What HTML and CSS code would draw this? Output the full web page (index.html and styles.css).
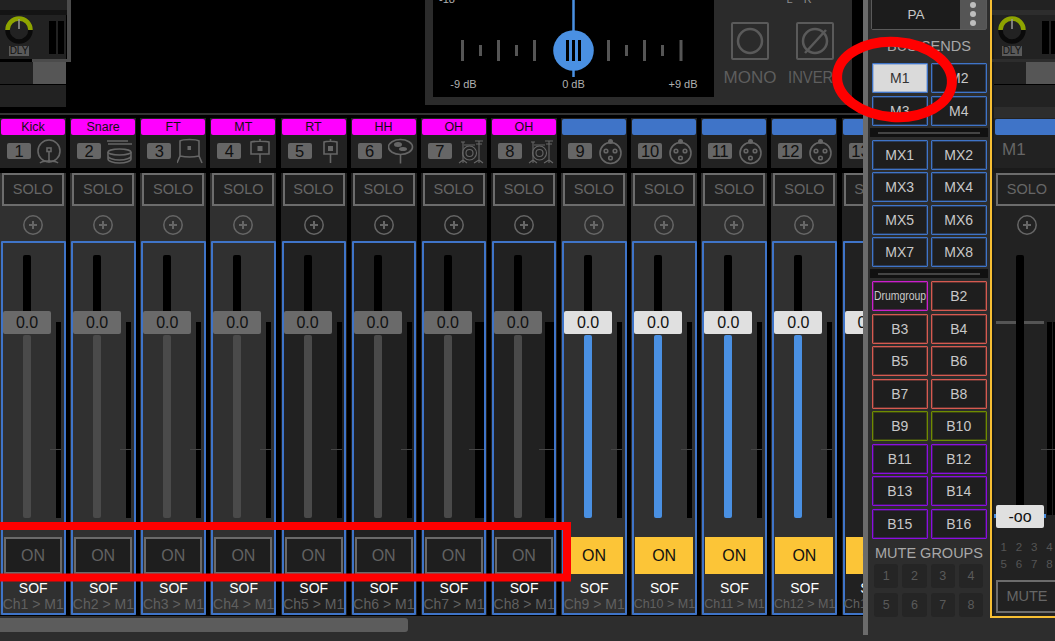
FILE: index.html
```html
<!DOCTYPE html>
<html lang="en">
<head>
<meta charset="utf-8">
<title>Mixer</title>
<link rel="stylesheet" href="styles.css">
</head>
<body>
<svg class="defs" width="0" height="0">
  <symbol id="i-kick" viewBox="0 0 26 28"><circle cx="12" cy="13" r="11"/><rect x="10" y="10" width="4" height="3.5"/><path d="M12 13.5V23M3 25c2-2 6-2 9-2s7 0 9 2"/><circle class="fill" cx="12" cy="23" r="1.6"/></symbol>
  <symbol id="i-snare" viewBox="0 0 26 28"><path d="M0 3h21M1 6h24"/><ellipse cx="12.5" cy="14" rx="11.5" ry="3"/><path d="M1 14v7c0 2 5 4 11.5 4S24 23 24 21v-7M1 18c0 2 5 4 11.5 4S24 20 24 18"/></symbol>
  <symbol id="i-floor" viewBox="0 0 26 28"><path d="M3 3c3-2 16-2 19 0v15c-5 1-14 1-19 0zM3 18l-3 7M22 18l3 7"/><rect class="fill" x="10.5" y="8" width="3.5" height="4"/></symbol>
  <symbol id="i-mid" viewBox="0 0 26 28"><path d="M4 4c3-1 15-1 18 0v12H4zM13 1v2M13 16v9"/><rect class="fill" x="10.5" y="8" width="5" height="5"/></symbol>
  <symbol id="i-rack" viewBox="0 0 26 28"><path d="M6 4c2-1 10-1 13 0v12H6zM12.5 1v2M12.5 16v9"/><rect class="fill" x="10" y="8" width="5" height="5"/></symbol>
  <symbol id="i-hh" viewBox="0 0 26 28"><ellipse cx="12.5" cy="9" rx="12" ry="7.5"/><path d="M12.5 16.500v9"/><ellipse class="fill" cx="10" cy="6.500" rx="4" ry="2.500"/><ellipse class="fill" cx="15" cy="11" rx="4" ry="2"/></symbol>
  <symbol id="i-kit" viewBox="0 0 26 28"><g class="fine"><circle cx="11.500" cy="15" r="7"/><circle cx="11.500" cy="15" r="3.500"/><path d="M6 7h11M3 4h4M5 4v21M1 25l4-3 4 3M21 3v22M16 25l5-3 4 3M17 3h8M18 6h6"/></g></symbol>
  <symbol id="i-xlr" viewBox="0 0 26 28"><circle cx="12.500" cy="15" r="10.500"/><circle class="fill" cx="12.500" cy="3.500" r="2.500"/><circle cx="8" cy="13" r="1.800"/><circle cx="17" cy="13" r="1.800"/><circle cx="12.500" cy="20" r="1.800"/></symbol>
  <symbol id="i-plus" viewBox="0 0 20 20"><circle cx="10" cy="10" r="9.200"/><path class="thick" d="M6 10h8M10 6v8"/></symbol>
</svg>
<div class="app">
  <div class="main">
    <div class="stage">
      <div class="top">
        <div class="stub">
          <div class="peek"><div class="peek-a"></div><div class="peek-b"></div></div>
          <div class="unit">
            <svg class="knob" width="28" height="28" viewBox="0 0 28 28"><path class="ring-off" d="M2.500 14a11.500 11.500 0 0 0 23 0"/><path class="ring-on" d="M2.500 14a11.500 11.500 0 0 1 23 0"/><path class="tick" d="M14 3v10"/></svg>
            <span class="dly">DLY</span>
            <div class="mini"><i></i><i></i></div>
          </div>
          <div class="corner"></div>
        </div>
        <div class="stub-low">
          <div class="bar"><div class="bar-on"></div></div>
          <div class="bar2"></div>
        </div>
        <div class="panel">
          <svg class="scale" width="281" height="97" viewBox="0 0 281 97">
            <text class="lab" x="14" y="3" text-anchor="middle">-18</text>
            <path class="ticks" d="M29.500 40v21M47.500 45v11M65.500 40v21M83.500 45v11M101.500 40v21M175.500 40v21M193.500 45v11M211.500 40v21M229.500 45v11M248 40v21"/>
            <path class="needle" d="M140.500 0v77"/>
            <circle class="puck" cx="140.500" cy="50.500" r="20.300"/>
            <path class="grip" d="M134.500 40v21M140.500 40v21M146.500 40v21"/>
            <text class="lab" x="30.500" y="88" text-anchor="middle">-9 dB</text>
            <text class="lab" x="140.500" y="88" text-anchor="middle">0 dB</text>
            <text class="lab" x="250" y="88" text-anchor="middle">+9 dB</text>
          </svg>
          <div class="modes">
            <div class="mode">
              <div class="lr lr-none"></div>
              <div class="mode-box"><svg width="34" height="34" viewBox="0 0 34 34"><circle cx="17" cy="17" r="12"/></svg></div>
              <span class="mode-label">MONO</span>
            </div>
            <div class="mode">
              <div class="lr"><span>L</span><span>R</span></div>
              <div class="mode-box"><svg width="34" height="34" viewBox="0 0 34 34"><circle cx="17" cy="17" r="12"/><path d="M7 29L28 6"/></svg></div>
              <span class="mode-label squeeze">INVERT</span>
            </div>
          </div>
        </div>
      </div>
      <div class="rule"></div>
      <div class="strips">

        <div class="strip lit">
          <div class="head"><div class="name drum">Kick</div><div class="idrow"><span class="num">1</span><svg class="ico"><use href="#i-kick"/></svg></div></div>
          <div class="body">
            <div class="solo">SOLO</div>
            <div class="addrow"><svg class="plus"><use href="#i-plus"/></svg></div>
            <div class="box">
              <div class="upper"><div class="fader"><div class="slot"></div><div class="thumb">0.0</div><div class="track"></div></div><div class="meter"></div></div>
              <div class="on">ON</div><div class="sof">SOF</div><div class="route">Ch1 &gt; M1</div>
            </div>
          </div>
        </div>

        <div class="strip lit">
          <div class="head"><div class="name drum">Snare</div><div class="idrow"><span class="num">2</span><svg class="ico"><use href="#i-snare"/></svg></div></div>
          <div class="body">
            <div class="solo">SOLO</div>
            <div class="addrow"><svg class="plus"><use href="#i-plus"/></svg></div>
            <div class="box">
              <div class="upper"><div class="fader"><div class="slot"></div><div class="thumb">0.0</div><div class="track"></div></div><div class="meter"></div></div>
              <div class="on">ON</div><div class="sof">SOF</div><div class="route">Ch2 &gt; M1</div>
            </div>
          </div>
        </div>

        <div class="strip lit">
          <div class="head"><div class="name drum">FT</div><div class="idrow"><span class="num">3</span><svg class="ico"><use href="#i-floor"/></svg></div></div>
          <div class="body">
            <div class="solo">SOLO</div>
            <div class="addrow"><svg class="plus"><use href="#i-plus"/></svg></div>
            <div class="box">
              <div class="upper"><div class="fader"><div class="slot"></div><div class="thumb">0.0</div><div class="track"></div></div><div class="meter"></div></div>
              <div class="on">ON</div><div class="sof">SOF</div><div class="route">Ch3 &gt; M1</div>
            </div>
          </div>
        </div>

        <div class="strip lit">
          <div class="head"><div class="name drum">MT</div><div class="idrow"><span class="num">4</span><svg class="ico"><use href="#i-mid"/></svg></div></div>
          <div class="body">
            <div class="solo">SOLO</div>
            <div class="addrow"><svg class="plus"><use href="#i-plus"/></svg></div>
            <div class="box">
              <div class="upper"><div class="fader"><div class="slot"></div><div class="thumb">0.0</div><div class="track"></div></div><div class="meter"></div></div>
              <div class="on">ON</div><div class="sof">SOF</div><div class="route">Ch4 &gt; M1</div>
            </div>
          </div>
        </div>

        <div class="strip">
          <div class="head"><div class="name drum">RT</div><div class="idrow"><span class="num">5</span><svg class="ico"><use href="#i-rack"/></svg></div></div>
          <div class="body">
            <div class="solo">SOLO</div>
            <div class="addrow"><svg class="plus"><use href="#i-plus"/></svg></div>
            <div class="box">
              <div class="upper"><div class="fader"><div class="slot"></div><div class="thumb">0.0</div><div class="track"></div></div><div class="meter"></div></div>
              <div class="on">ON</div><div class="sof">SOF</div><div class="route">Ch5 &gt; M1</div>
            </div>
          </div>
        </div>

        <div class="strip">
          <div class="head"><div class="name drum">HH</div><div class="idrow"><span class="num">6</span><svg class="ico"><use href="#i-hh"/></svg></div></div>
          <div class="body">
            <div class="solo">SOLO</div>
            <div class="addrow"><svg class="plus"><use href="#i-plus"/></svg></div>
            <div class="box">
              <div class="upper"><div class="fader"><div class="slot"></div><div class="thumb">0.0</div><div class="track"></div></div><div class="meter"></div></div>
              <div class="on">ON</div><div class="sof">SOF</div><div class="route">Ch6 &gt; M1</div>
            </div>
          </div>
        </div>

        <div class="strip">
          <div class="head"><div class="name drum">OH</div><div class="idrow"><span class="num">7</span><svg class="ico"><use href="#i-kit"/></svg></div></div>
          <div class="body">
            <div class="solo">SOLO</div>
            <div class="addrow"><svg class="plus"><use href="#i-plus"/></svg></div>
            <div class="box">
              <div class="upper"><div class="fader"><div class="slot"></div><div class="thumb">0.0</div><div class="track"></div></div><div class="meter wide"></div></div>
              <div class="on">ON</div><div class="sof">SOF</div><div class="route">Ch7 &gt; M1</div>
            </div>
          </div>
        </div>

        <div class="strip">
          <div class="head"><div class="name drum">OH</div><div class="idrow"><span class="num">8</span><svg class="ico"><use href="#i-kit"/></svg></div></div>
          <div class="body">
            <div class="solo">SOLO</div>
            <div class="addrow"><svg class="plus"><use href="#i-plus"/></svg></div>
            <div class="box">
              <div class="upper"><div class="fader"><div class="slot"></div><div class="thumb">0.0</div><div class="track"></div></div><div class="meter wide"></div></div>
              <div class="on">ON</div><div class="sof">SOF</div><div class="route">Ch8 &gt; M1</div>
            </div>
          </div>
        </div>

        <div class="strip lit live">
          <div class="head"><div class="name"></div><div class="idrow"><span class="num">9</span><svg class="ico"><use href="#i-xlr"/></svg></div></div>
          <div class="body">
            <div class="solo">SOLO</div>
            <div class="addrow"><svg class="plus"><use href="#i-plus"/></svg></div>
            <div class="box">
              <div class="upper"><div class="fader"><div class="slot"></div><div class="thumb">0.0</div><div class="track"></div></div><div class="meter"></div></div>
              <div class="on">ON</div><div class="sof">SOF</div><div class="route">Ch9 &gt; M1</div>
            </div>
          </div>
        </div>

        <div class="strip lit live">
          <div class="head"><div class="name"></div><div class="idrow"><span class="num">10</span><svg class="ico"><use href="#i-xlr"/></svg></div></div>
          <div class="body">
            <div class="solo">SOLO</div>
            <div class="addrow"><svg class="plus"><use href="#i-plus"/></svg></div>
            <div class="box">
              <div class="upper"><div class="fader"><div class="slot"></div><div class="thumb">0.0</div><div class="track"></div></div><div class="meter"></div></div>
              <div class="on">ON</div><div class="sof">SOF</div><div class="route tight">Ch10 &gt; M1</div>
            </div>
          </div>
        </div>

        <div class="strip lit live">
          <div class="head"><div class="name"></div><div class="idrow"><span class="num">11</span><svg class="ico"><use href="#i-xlr"/></svg></div></div>
          <div class="body">
            <div class="solo">SOLO</div>
            <div class="addrow"><svg class="plus"><use href="#i-plus"/></svg></div>
            <div class="box">
              <div class="upper"><div class="fader"><div class="slot"></div><div class="thumb">0.0</div><div class="track"></div></div><div class="meter"></div></div>
              <div class="on">ON</div><div class="sof">SOF</div><div class="route tight">Ch11 &gt; M1</div>
            </div>
          </div>
        </div>

        <div class="strip lit live">
          <div class="head"><div class="name"></div><div class="idrow"><span class="num">12</span><svg class="ico"><use href="#i-xlr"/></svg></div></div>
          <div class="body">
            <div class="solo">SOLO</div>
            <div class="addrow"><svg class="plus"><use href="#i-plus"/></svg></div>
            <div class="box">
              <div class="upper"><div class="fader"><div class="slot"></div><div class="thumb">0.0</div><div class="track"></div></div><div class="meter"></div></div>
              <div class="on">ON</div><div class="sof">SOF</div><div class="route tight">Ch12 &gt; M1</div>
            </div>
          </div>
        </div>

        <div class="strip live">
          <div class="head"><div class="name"></div><div class="idrow"><span class="num">13</span><svg class="ico"><use href="#i-xlr"/></svg></div></div>
          <div class="body">
            <div class="solo">SOLO</div>
            <div class="addrow"><svg class="plus"><use href="#i-plus"/></svg></div>
            <div class="box">
              <div class="upper"><div class="fader"><div class="slot"></div><div class="thumb">0.0</div><div class="track"></div></div><div class="meter"></div></div>
              <div class="on">ON</div><div class="sof">SOF</div><div class="route tight">Ch13 &gt; M1</div>
            </div>
          </div>
        </div>

      </div>
    </div>
    <div class="scrollbar"><div class="scrollthumb"></div></div>
  </div>

  <div class="divider"></div>

  <aside class="bus">
    <div class="pa"><div class="pa-name">PA</div><div class="pa-more"><i></i><i></i><i></i></div></div>
    <div class="bus-title">BUS SENDS</div>
    <div class="sends">
      <div class="send blue active">M1</div><div class="send blue">M2</div>
      <div class="send blue">M3</div><div class="send blue">M4</div>
    </div>
    <div class="sep"><i></i></div>
    <div class="sends">
      <div class="send blue">MX1</div><div class="send blue">MX2</div>
      <div class="send blue">MX3</div><div class="send blue">MX4</div>
      <div class="send blue">MX5</div><div class="send blue">MX6</div>
      <div class="send blue">MX7</div><div class="send blue">MX8</div>
    </div>
    <div class="sep"><i></i></div>
    <div class="sends">
      <div class="send pink"><span class="squeeze small">Drumgroup</span></div><div class="send red">B2</div>
      <div class="send red">B3</div><div class="send red">B4</div>
      <div class="send red">B5</div><div class="send red">B6</div>
      <div class="send red">B7</div><div class="send red">B8</div>
      <div class="send olive">B9</div><div class="send olive">B10</div>
      <div class="send violet">B11</div><div class="send violet">B12</div>
      <div class="send violet">B13</div><div class="send violet">B14</div>
      <div class="send violet">B15</div><div class="send violet">B16</div>
    </div>
    <div class="mg-title">MUTE GROUPS</div>
    <div class="mg">
      <div>1</div><div>2</div><div>3</div><div>4</div>
      <div>5</div><div>6</div><div>7</div><div>8</div>
    </div>
  </aside>

  <section class="master">
    <div class="m-a"></div>
    <div class="m-b"></div>
    <div class="unit">
      <svg class="knob" width="28" height="28" viewBox="0 0 28 28"><path class="ring-off" d="M2.500 14a11.500 11.500 0 0 0 23 0"/><path class="ring-on" d="M2.500 14a11.500 11.500 0 0 1 23 0"/><path class="tick" d="M14 3v10"/></svg>
      <span class="dly">DLY</span>
      <div class="mini"><i></i><i></i></div>
    </div>
    <div class="m-gap"></div>
    <div class="bar"><div class="bar-on"></div></div>
    <div class="bar2"></div>
    <div class="m-c"></div>
    <div class="strip mstrip live">
      <div class="head"><div class="name"></div><div class="idrow"><span class="mname">M1</span></div></div>
      <div class="body">
        <div class="solo">SOLO</div>
        <div class="addrow"><svg class="plus"><use href="#i-plus"/></svg></div>
        <div class="mbox">
          <div class="upper">
            <div class="fader mfader"><div class="slot"></div><div class="thumb">-oo</div><span class="unity"></span></div>
            <div class="meter stereo"></div>
          </div>
          <div class="groups"><span>1</span><span>2</span><span>3</span><span>4</span><span>5</span><span>6</span><span>7</span><span>8</span></div>
          <div class="mute">MUTE</div>
        </div>
      </div>
    </div>
  </section>
</div>
<svg class="marks" width="1055" height="641" viewBox="0 0 1055 641">
  <rect x="-10" y="526" width="577" height="51.500"/>
  <ellipse cx="894.500" cy="79.500" rx="57.500" ry="37.500" transform="rotate(4 894.500 79.500)"/>
</svg>
</body>
</html>
```
FILE: styles.css
```css
* { box-sizing: border-box; }
html, body { margin: 0; padding: 0; background: #2d2d2d; }
body {
  width: 1055px;
  height: 641px;
  overflow: hidden;
  position: relative;
  font-family: "Liberation Sans", Arial, sans-serif;
}
.defs { position: absolute; }
.app { display: flex; width: 1055px; height: 641px; overflow: hidden; background: #2d2d2d; }
.main { flex: none; width: 863px; display: flex; flex-direction: column; }
.stage { background: #000; height: 616px; overflow: hidden; }

/* top band */
.top { height: 113px; display: grid; grid-template-columns: 71px 354px 427px; grid-template-rows: 62px 45px; }
.stub { grid-row: 1; grid-column: 1; background: #000; border-right: 4px solid #4b4b4b; display: flex; flex-direction: column; position: relative; }
.peek { height: 15px; flex: none; }
.peek-a { height: 10px; background: #222; }
.peek-b { height: 5px; background: #141414; }
.unit { position: relative; height: 44px; background: #222; flex: none; }
.stub .unit { width: 66px; }
.knob { position: absolute; left: 5px; top: 1px; fill: none; }
.ring-off { stroke: #0a0a0a; stroke-width: 4.500; }
.ring-on { stroke: #8ea400; stroke-width: 4.500; }
.tick { stroke: #9a9a9a; stroke-width: 1.500; }
.dly {
  position: absolute; left: 9px; top: 31px; width: 20px; height: 10px;
  background: #5a5a5a; color: #111; font-size: 10px; line-height: 10px; text-align: center;
}
.mini { position: absolute; left: 49px; top: 6px; width: 15px; height: 33px; display: flex; gap: 2px; }
.mini i { flex: 1; background: #000; }
.corner { height: 3px; margin-left: 32px; background: #4b4b4b; flex: none; }
.stub-low { grid-row: 2; grid-column: 1; width: 66px; }
.bar { height: 23px; background: #222; display: flex; justify-content: flex-end; border-bottom: 1px solid #000; }
.bar-on { width: 33px; background: #565656; }
.bar2 { height: 22px; background: #222; }
.panel { grid-row: 1 / 3; grid-column: 3; height: 105px; background: #2b2b2b; padding: 0 8px 8px; display: flex; }
.scale { flex: none; background: #000; }
.lab { font-size: 11px; fill: #b0b0b0; font-family: "Liberation Sans", Arial, sans-serif; }
.ticks { stroke: #555; stroke-width: 3; fill: none; }
.needle { stroke: #4a90e2; stroke-width: 2.500; fill: none; }
.puck { fill: #4a90e2; }
.grip { stroke: #000; stroke-width: 3; fill: none; }
.modes { display: flex; padding-left: 3.500px; }
.mode { width: 65px; display: flex; flex-direction: column; align-items: center; }
.lr { width: 100%; display: flex; gap: 11px; padding-left: 4px; color: #8c8c8c; font-size: 11px; line-height: 11px; margin-top: -6px; height: 28px; }
.lr-none { height: 22px; margin-top: 0; }
.mode-box { width: 38px; height: 38px; border: 2px solid #5a5a5a; border-radius: 2px; }
.mode-box svg { display: block; fill: none; stroke: #5a5a5a; stroke-width: 2.500; }
.mode-label { margin-top: 8px; font-size: 17px; line-height: 20px; color: #5e5e5e; white-space: nowrap; }
.squeeze { display: inline-block; transform: scaleX(.87); }
.rule { height: 2px; background: #333; }

/* channel strips */
.strips { display: flex; gap: 4.140px; height: 501px; overflow: hidden; padding-top: 3px; }
.strip { flex: none; width: 66px; color: #666; --panel: #212121; }
.strip.lit { --panel: #303030; }
.head { height: 50px; background: #222; padding-top: 1px; }
.name {
  height: 16px; margin: 0 1px; border-radius: 2px; background: #3f74c8;
  color: #111; font-size: 12.500px; line-height: 16px; text-align: center;
}
.name.drum { background: #f0f; }
.idrow { display: flex; align-items: flex-start; padding: 3px 0 0 7px; }
.num {
  flex: none; width: 24px; height: 16px; margin-top: 5px; border-radius: 2px;
  background: #666; color: #111; font-size: 16.500px; line-height: 17px; text-align: center;
}
.ico { flex: none; width: 26px; height: 28px; margin-left: 6px; fill: none; stroke: #666; stroke-width: 1.600; }
.fine { stroke-width: 1.100; }
.body { margin-top: 5px; height: 442px; background: var(--panel); display: flow-root; }
.solo {
  height: 33px; margin: 0 2px; border: 2px solid #6c6c6c; background: #212121;
  font-size: 14.500px; line-height: 29px; text-align: center; color: #666;
}
.addrow { height: 35px; display: flex; align-items: center; justify-content: center; padding-top: 2px; }
.plus { width: 20px; height: 20px; fill: none; stroke: #666; stroke-width: 1.500; }
.thick { stroke-width: 2; }
.fill { fill: #666; stroke: none; }
.box { height: 374px; margin-left: 1px; width: 64.500px; border: 2px solid #3f74c8; border-radius: 1px; }
.upper { display: flex; height: 275px; }
.fader { flex: none; width: 48px; display: flex; flex-direction: column; align-items: center; padding-top: 12px; position: relative; }
.slot { flex: none; width: 8px; height: 56px; background: #000; border-radius: 2px 2px 0 0; }
.thumb {
  flex: none; width: 48px; height: 23px; border-radius: 2px; background: #6a6a6a;
  color: #111; font-size: 16px; line-height: 23px; text-align: center;
}
.track { flex: none; width: 8px; height: 183px; margin-top: 1px; border-radius: 2px; background: #4a4a4a; }
.meter { flex: none; position: relative; width: 5px; height: 196px; margin: 79px 0 0 5px; background: #000; }
.meter::after { content: ""; position: absolute; left: -6px; right: 0; top: 127px; height: 1px; background: #444; }
.meter.wide { width: 9px; margin-left: 3px; }
.on {
  width: 58px; height: 37px; margin: 19px 0 0 1px; border: 2px solid #6a6a6a; background: #1e1e1e;
  color: #626262; font-size: 16px; line-height: 33px; text-align: center;
}
.sof { margin-top: 6px; color: #fff; font-size: 14px; line-height: 16px; text-align: center; }
.route { display: flex; justify-content: center; color: #606060; font-size: 14px; line-height: 16px; white-space: nowrap; }
.route.tight { font-size: 12.500px; }
.live .thumb { background: #e0e0e0; }
.live .track { background: #4a90e2; }
.live .on { border: 0; background: #fcc537; color: #111; line-height: 37px; }

/* scrollbar */
.scrollbar { flex: 1; padding-top: 2px; }
.scrollthumb { width: 408px; height: 14px; background: #5c5c5c; border-radius: 0 3px 3px 0; }

.divider { flex: none; width: 5px; height: 635px; background: #6b6b6b; }

/* bus sends */
.bus { flex: none; width: 122px; background: #2d2d2d; display: flow-root; }
.pa { display: flex; height: 32px; margin: -2px 3px 0 3px; border: 1px solid #5a5a5a; border-radius: 2px; }
.pa-name { flex: 1; background: #1c1c1c; color: #c8c8c8; font-size: 13.500px; line-height: 32px; text-align: center; }
.pa-more { width: 26px; background: #555; display: flex; flex-direction: column; align-items: center; justify-content: flex-end; gap: 3px; padding-bottom: 3px; }
.pa-more i { width: 6px; height: 6px; border-radius: 50%; background: #bdbdbd; }
.bus-title { margin-top: 6px; height: 27px; color: #a8a8a8; font-size: 14.500px; line-height: 20px; text-align: center; }
.sends { display: grid; grid-template-columns: 56.500px 56.500px; gap: 2.500px; grid-auto-rows: 30px; margin-left: 3.500px; }
.send {
  --c: #3f74c8;
  border: 1px solid var(--c); border-radius: 1px; background: #1e1e1e;
  box-shadow: inset 0 0 0 1px color-mix(in srgb, var(--c) 35%, transparent);
  color: #c8c8c8; font-size: 14px; line-height: 28px; text-align: center; white-space: nowrap;
}
.send.active { background: #dadada; color: #333; }
.send.pink { --c: #cc1fcc; display: flex; justify-content: center; }
.send.red { --c: #d65a50; }
.send.olive { --c: #6f8c00; }
.send.violet { --c: #8a0ee0; }
.small { font-size: 12px; }
.sep { height: 9px; margin: 2px 2px 3px 2px; background: #111; padding-top: 4px; }
.sep i { display: block; height: 2px; margin: 0 8px; background: #444; }
.mg-title { margin-top: 5px; height: 20.500px; color: #a8a8a8; font-size: 14.500px; line-height: 18px; text-align: center; }
.mg { display: grid; grid-template-columns: repeat(4, 24.300px); grid-auto-rows: 24.300px; gap: 4.400px 4px; margin-left: 6px; }
.mg div { background: #252525; border-radius: 3px; color: #5a5a5a; font-size: 12.500px; line-height: 24px; text-align: center; }

/* master */
.master { flex: 1; min-width: 0; height: 618px; border-left: 2px solid #f7bf33; border-bottom: 2px solid #f7bf33; background: #1a1a1a; position: relative; overflow: hidden; }
.m-a { height: 10px; background: #222; }
.m-b { height: 5px; background: #2d2d2d; }
.master .unit { width: 63px; margin-left: 2px; overflow: hidden; }
.master .knob { left: 4px; }
.master .dly { left: 8px; }
.master .mini { left: 48px; }
.m-gap { height: 3px; background: #2d2d2d; }
.master .bar, .master .bar2 { margin-left: 2px; }
.master .bar-on { width: 29px; }
.m-c { height: 11px; background: #2d2d2d; margin-left: 2px; }
.mstrip { margin-left: 2px; }
.mname { font-size: 17px; line-height: 20px; margin: 2px 0 0 1px; color: #666; }
.mstrip .body { height: 445px; background: #222; }
.mbox { padding: 2px 0 0 2px; }
.mfader { padding-top: 12px; }
.mfader .slot { height: 250px; position: relative; z-index: 1; }
.unity { position: absolute; left: 0; top: 78px; width: 48px; height: 3px; background: #555; }
.mfader .thumb { position: relative; }
.mfader .thumb::before, .mfader .thumb::after { content: ""; position: absolute; top: 9px; width: 2px; height: 4px; background: #4a90e2; }
.mfader .thumb::before { left: -2px; }
.mfader .thumb::after { right: -2px; }
.meter.stereo { width: 13px; height: 193px; margin: 79px 0 0 3px; background: linear-gradient(90deg, #000 0 5px, #222 5px 6px, #000 6px); }
.groups { display: grid; grid-template-columns: repeat(4, 15.300px); grid-auto-rows: 17px; margin: 21px 0 0; color: #555; font-size: 11.500px; line-height: 17px; text-align: center; }
.mute { width: 62px; height: 33px; margin: 7px 0 0; border: 2px solid #6c6c6c; background: #212121; color: #666; font-size: 14.500px; line-height: 29px; text-align: center; }

/* annotations */
.marks { position: absolute; left: 0; top: 0; pointer-events: none; fill: none; stroke: #f00; stroke-width: 8; }
.marks ellipse { stroke-width: 10; }
```
